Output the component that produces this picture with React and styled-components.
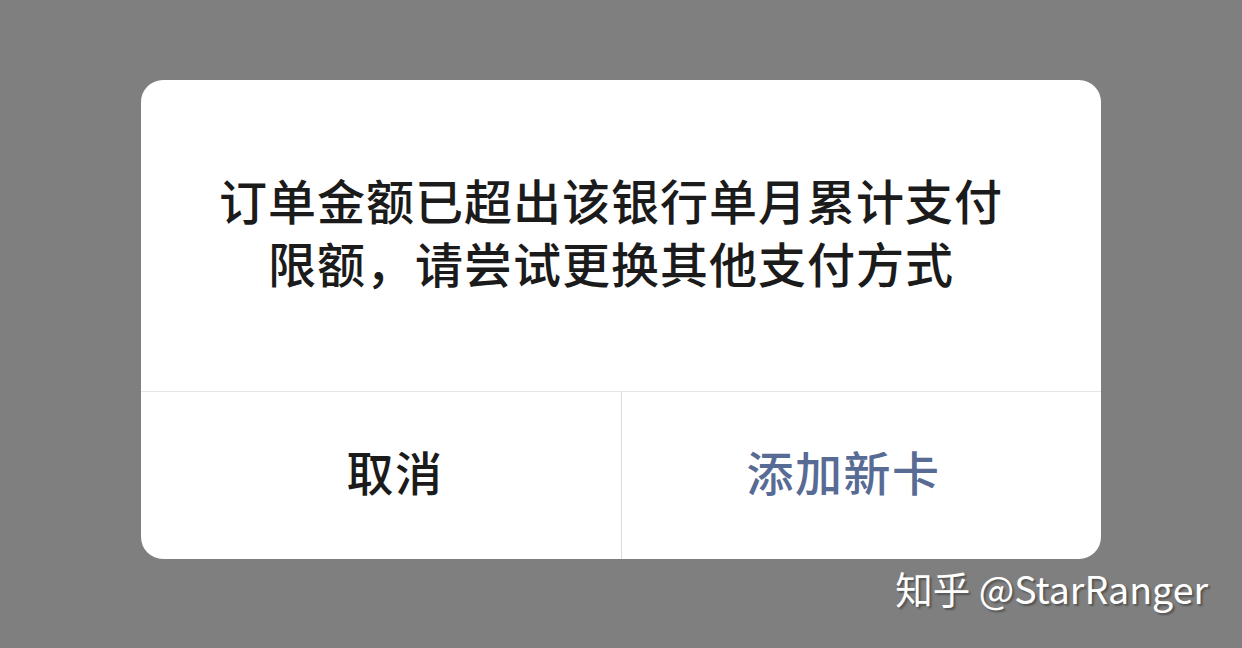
import React from "react";
import styled, { createGlobalStyle } from "styled-components";

const GlobalStyle = createGlobalStyle`
  * {
    margin: 0;
    padding: 0;
    box-sizing: border-box;
  }
  body {
    background: #7f7f7f;
    font-family: "Noto Sans CJK SC", "Noto Sans", sans-serif;
  }
`;

const Page = styled.div`
  width: 1242px;
  height: 648px;
  display: flex;
  flex-direction: column;
  padding: 80px 0 0 141px;
  overflow: hidden;
`;

const Dialog = styled.div`
  width: 960px;
  height: 479px;
  background: #fff;
  border-radius: 22px;
  display: flex;
  flex-direction: column;
  overflow: hidden;
`;

const Body = styled.div`
  height: 312px;
  display: flex;
  align-items: center;
  justify-content: center;
  padding: 0 20px 10px 0;
  border-bottom: 1px solid #e6e6e6;
`;

const Message = styled.p`
  font-size: 48px;
  line-height: 63px;
  letter-spacing: 1px;
  font-weight: 500;
  color: #1b1b1b;
  text-align: center;
  width: 800px;
`;

const Actions = styled.div`
  flex: 1;
  display: flex;
`;

const Action = styled.button`
  flex: 0 0 50%;
  border: none;
  background: transparent;
  font-family: inherit;
  font-size: 47px;
  font-weight: 500;
  letter-spacing: 1.5px;
  padding: 0 ${(p) => p.$right || 0}px 10px ${(p) => p.$left || 0}px;
  color: ${(p) => (p.$primary ? "#576b95" : "#1b1b1b")};
  & + & {
    border-left: 1px solid #dcdcdc;
  }
`;

const Footer = styled.div`
  display: flex;
  justify-content: flex-end;
  padding: 7px 34px 0 0;
`;

const Watermark = styled.span`
  font-size: 37.5px;
  line-height: 43px;
  color: #fff;
  text-shadow: 2px 2px 2px rgba(0, 0, 0, 0.35);
`;

export default function App() {
  return (
    <>
      <GlobalStyle />
      <Page>
        <Dialog>
          <Body>
            <Message>
              订单金额已超出该银行单月累计支付限额，请尝试更换其他支付方式
            </Message>
          </Body>
          <Actions>
            <Action $left={28}>取消</Action>
            <Action $primary $right={36}>添加新卡</Action>
          </Actions>
        </Dialog>
        <Footer>
          <Watermark>知乎 @StarRanger</Watermark>
        </Footer>
      </Page>
    </>
  );
}
